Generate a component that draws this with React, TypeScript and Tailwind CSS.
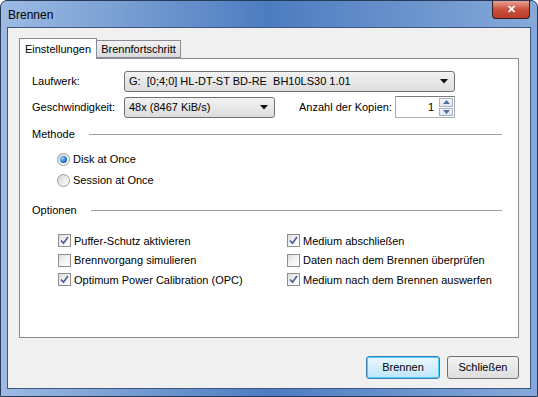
import { useState } from "react";

const font = { fontFamily: '"Liberation Sans", Arial, sans-serif' };

const Check = ({ checked, label }: { checked: boolean; label: string }) => (
  <div className="flex h-[19.5px] items-center gap-[3px]">
    <div className="flex h-[13px] w-[13px] items-center justify-center border border-[#8f8f8f] bg-gradient-to-br from-[#dcdcdc] via-[#f4f4f4] to-white">
      {checked && (
        <svg width="9" height="9" viewBox="0 0 9 9">
          <path d="M1 4.5 L3.5 7.2 L8 1" stroke="#4b5f99" strokeWidth="1.7" fill="none" />
        </svg>
      )}
    </div>
    <span>{label}</span>
  </div>
);

const Radio = ({ checked, label }: { checked: boolean; label: string }) => (
  <div className="flex h-[21px] items-center gap-[3px]">
    <div className="flex h-[13px] w-[13px] items-center justify-center rounded-full border border-[#9a9a9a] bg-gradient-to-br from-[#d6d6d6] to-white">
      {checked && <div className="h-[7px] w-[7px] rounded-full bg-[radial-gradient(circle_at_35%_35%,#8fd2ff,#1a6fc0_60%,#0b3e86)]" />}
    </div>
    <span>{label}</span>
  </div>
);

const Group = ({ title }: { title: string }) => (
  <div className="flex h-[16px] items-center gap-[14px] pr-[16px]">
    <span>{title}</span>
    <div className="h-px flex-1 bg-[#a0a0a0]" />
  </div>
);

const Arrow = () => (
  <svg width="8" height="5" viewBox="0 0 8 5">
    <path d="M0 0 H8 L4 4.5 Z" fill="#111" />
  </svg>
);

export default function App() {
  const [tab, setTab] = useState(0);
  return (
    <div style={font} className="h-[397px] w-[538px] overflow-hidden text-[11px] text-black">
      <div className="flex h-full w-full flex-col rounded-t-[7px] border border-[#273a58] bg-gradient-to-r from-[#9dbbe3] via-[#4c7cc0] to-[#86a9d9] px-[6px] pb-[7px]">
        <div className="flex h-[26px] items-start justify-between">
          <span className="pl-[1px] pt-[7px] text-[12px] leading-[14px]">Brennen</span>
          <div className="mr-[1px] flex h-[18px] w-[38px] items-center justify-center rounded-b-[4px] border border-t-0 border-[#3b1c1c] bg-gradient-to-b from-[#e7a193] via-[#c9503c] to-[#bb3c2a]">
            <span className="text-[11px] font-bold leading-none text-white">✕</span>
          </div>
        </div>
        <div className="flex flex-1 flex-col border border-[#3d577e] bg-[#f0f0f0] px-[11px] pt-[9px]">
          <div className="flex h-[21px] items-end">
            <div
              onClick={() => setTab(0)}
              className="relative z-10 -mb-px flex h-[21px] w-[78px] items-center justify-center border border-b-0 border-[#898c95] bg-white"
            >
              Einstellungen
            </div>
            <div
              onClick={() => setTab(1)}
              className="flex h-[18px] w-[84px] items-center justify-center border border-l-0 border-[#898c95] bg-gradient-to-b from-[#f2f2f2] to-[#dadada]"
            >
              Brennfortschritt
            </div>
          </div>
          <div className="h-[280px] border border-[#898c95] bg-white pl-[12px] pt-[12px]">
            {tab === 0 && (
              <>
                <div className="flex h-[21px] items-center">
                  <span className="w-[92px]">Laufwerk:</span>
                  <div className="flex h-[21px] w-[331px] items-center justify-between rounded-[3px] border border-[#707070] bg-gradient-to-b from-[#f2f2f2] to-[#dddddd] pl-[4px] pr-[6px]">
                    <span className="whitespace-pre">G:  [0;4;0] HL-DT-ST BD-RE  BH10LS30 1.01</span>
                    <Arrow />
                  </div>
                </div>
                <div className="mt-[4px] flex h-[22px] items-center">
                  <span className="w-[92px]">Geschwindigkeit:</span>
                  <div className="flex h-[21px] w-[151px] items-center justify-between rounded-[3px] border border-[#707070] bg-gradient-to-b from-[#f2f2f2] to-[#dddddd] pl-[4px] pr-[6px]">
                    <span>48x (8467 KiB/s)</span>
                    <Arrow />
                  </div>
                  <span className="ml-[24px] w-[96px] whitespace-nowrap">Anzahl der Kopien:</span>
                  <div className="flex h-[22px] w-[60px] items-stretch border border-[#abadb3] border-t-[#7a7a7a] bg-white">
                    <span className="flex flex-1 items-center justify-end pr-[4px]">1</span>
                    <div className="flex w-[16px] flex-col gap-px p-px">
                      <div className="flex flex-1 items-center justify-center border border-[#a7b3c5] bg-gradient-to-b from-[#f5f8fc] to-[#dde5ef]">
                        <svg width="7" height="4" viewBox="0 0 7 4"><path d="M0 4 H7 L3.5 0 Z" fill="#4f6f9c" /></svg>
                      </div>
                      <div className="flex flex-1 items-center justify-center border border-[#a7b3c5] bg-gradient-to-b from-[#f5f8fc] to-[#dde5ef]">
                        <svg width="7" height="4" viewBox="0 0 7 4"><path d="M0 0 H7 L3.5 4 Z" fill="#4f6f9c" /></svg>
                      </div>
                    </div>
                  </div>
                </div>
                <div className="mt-[8px]">
                  <Group title="Methode" />
                </div>
                <div className="mt-[7px] pl-[25px]">
                  <Radio checked label="Disk at Once" />
                  <Radio checked={false} label="Session at Once" />
                </div>
                <div className="mt-[11px]">
                  <Group title="Optionen" />
                </div>
                <div className="mt-[13px] flex pl-[26px]">
                  <div className="w-[229px]">
                    <Check checked label="Puffer-Schutz aktivieren" />
                    <Check checked={false} label="Brennvorgang simulieren" />
                    <Check checked label="Optimum Power Calibration (OPC)" />
                  </div>
                  <div>
                    <Check checked label="Medium abschließen" />
                    <Check checked={false} label="Daten nach dem Brennen überprüfen" />
                    <Check checked label="Medium nach dem Brennen auswerfen" />
                  </div>
                </div>
              </>
            )}
          </div>
          <div className="mt-[18px] flex justify-end gap-[7px]">
            <button className="h-[23px] w-[74px] rounded-[3px] border border-[#3c7fb1] bg-gradient-to-b from-[#eaf6fd] to-[#bee6fd] shadow-[inset_0_0_0_1px_#48d1f8]">
              Brennen
            </button>
            <button className="h-[23px] w-[72px] rounded-[3px] border border-[#707070] bg-gradient-to-b from-[#f2f2f2] to-[#dddddd]">
              Schließen
            </button>
          </div>
        </div>
      </div>
    </div>
  );
}
